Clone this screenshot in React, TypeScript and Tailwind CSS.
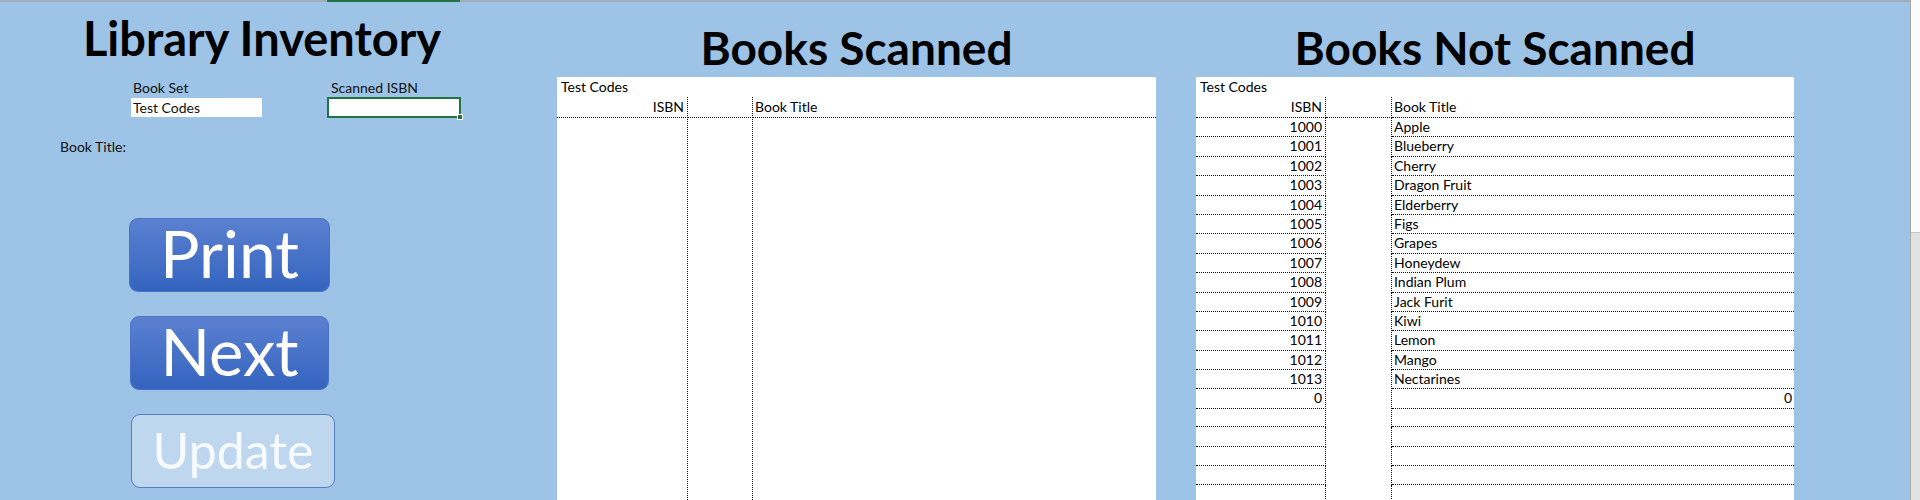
import React from "react";

const F = "font-['Lato',sans-serif]";

const fruits: [number, string][] = [
  [1000, "Apple"],
  [1001, "Blueberry"],
  [1002, "Cherry"],
  [1003, "Dragon Fruit"],
  [1004, "Elderberry"],
  [1005, "Figs"],
  [1006, "Grapes"],
  [1007, "Honeydew"],
  [1008, "Indian Plum"],
  [1009, "Jack Furit"],
  [1010, "Kiwi"],
  [1011, "Lemon"],
  [1012, "Mango"],
  [1013, "Nectarines"],
];

function LeftPanel() {
  return (
    <div className={`w-[557px] shrink-0 flex flex-col ${F}`}>
      <div className="w-[524px] mt-[13px] h-[47px] leading-[47px] text-center text-[47px] font-bold text-black">
        Library Inventory
      </div>
      <div className="flex mt-[16px] text-[14px] text-[#111]">
        <div className="ml-[131px] w-[131px] flex flex-col">
          <div className="h-[20px] leading-[20px] pl-[2px]">Book Set</div>
          <div className="h-[19px] leading-[19px] bg-white pl-[2px]">Test Codes</div>
        </div>
        <div className="ml-[65px] w-[134px] flex flex-col">
          <div className="h-[20px] leading-[20px] pl-[4px]">Scanned ISBN</div>
          <div className="relative -mt-[1px] h-[21px] bg-white border-2 border-[#217346]">
            <div className="absolute -right-[4px] -bottom-[4px] w-[6px] h-[6px] bg-[#217346] border border-white" />
          </div>
        </div>
      </div>
      <div className="mt-[19px] ml-[60px] h-[20px] leading-[20px] text-[14px] text-[#111]">Book Title:</div>
      <div className="mt-[61px] ml-[129px] w-[201px] h-[74px] rounded-[9px] border border-[#4d72c2] bg-gradient-to-b from-[#5b80d0] to-[#3464bf] flex items-center justify-center text-white text-[66px] leading-none pb-[5px]">
        Print
      </div>
      <div className="mt-[24px] ml-[130px] w-[199px] h-[74px] rounded-[9px] border border-[#4d72c2] bg-gradient-to-b from-[#5b80d0] to-[#3464bf] flex items-center justify-center text-white text-[65px] leading-none pb-[4px]">
        Next
      </div>
      <div className="mt-[24px] ml-[131px] w-[204px] h-[74px] rounded-[9px] border border-[#5a7cc5] bg-[#bed6ee] flex items-center justify-center text-[#f7faff] text-[50px] leading-none pb-[2px]">
        Update
      </div>
    </div>
  );
}

const dot = "border-dotted border-[#111]";

function ScannedTable() {
  return (
    <div className={`w-[599px] shrink-0 flex flex-col ${F}`}>
      <div className="h-[75px] flex items-end justify-center pb-[6px]">
        <div className="text-[46px] leading-[46px] font-bold text-black">Books Scanned</div>
      </div>
      <div className="flex-1 bg-white flex flex-col text-[14px] text-black">
        <div className="h-[20px] leading-[20px] pl-[4px]">Test Codes</div>
        <div className="grid grid-cols-[131px_65px_1fr] h-[20px] leading-[20px]">
          <div className={`border-r border-b ${dot} text-right pr-[3px]`}>ISBN</div>
          <div className={`border-r border-b ${dot}`} />
          <div className={`border-b ${dot} pl-[2px]`}>Book Title</div>
        </div>
        <div className="flex-1 grid grid-cols-[131px_65px_1fr]">
          <div className={`border-r ${dot}`} />
          <div className={`border-r ${dot}`} />
          <div />
        </div>
      </div>
    </div>
  );
}

function NotScannedTable() {
  const rows: [string, string, boolean][] = fruits.map(([n, t]) => [String(n), t, false]);
  rows.push(["0", "0", true]);
  for (let i = 0; i < 6; i++) rows.push(["", "", false]);
  return (
    <div className={`w-[598px] shrink-0 flex flex-col ${F}`}>
      <div className="h-[75px] flex items-end justify-center pb-[6px]">
        <div className="text-[46px] leading-[46px] font-bold text-black">Books Not Scanned</div>
      </div>
      <div className="flex-1 bg-white flex flex-col text-[14px] text-black overflow-hidden">
        <div className="h-[20px] leading-[20px] pl-[4px] shrink-0">Test Codes</div>
        <div className="grid grid-cols-[130px_66px_1fr] h-[20px] leading-[20px] shrink-0">
          <div className={`border-r border-b ${dot} text-right pr-[3px]`}>ISBN</div>
          <div className={`border-r border-b ${dot}`} />
          <div className={`border-b ${dot} pl-[2px]`}>Book Title</div>
        </div>
        {rows.map(([n, t, right], i) => (
          <div key={i} className="grid grid-cols-[130px_66px_1fr] h-[19.4px] leading-[19.4px] shrink-0">
            <div className={`border-r border-b ${dot} text-right pr-[3px]`}>{n}</div>
            <div className={`border-r ${dot}`} />
            <div className={`border-b ${dot} ${right ? "text-right pr-[2px]" : "pl-[2px]"}`}>{t}</div>
          </div>
        ))}
      </div>
    </div>
  );
}

export default function App() {
  return (
    <div className="w-[1920px] h-[500px] overflow-hidden flex bg-[#9dc3e6]">
      <div className="w-[1910px] h-[500px] flex flex-col">
        <div className="h-[2px] bg-[#a3adba] relative shrink-0">
          <div className="absolute left-[327px] top-0 w-[133px] h-[2px] bg-[#217346]" />
        </div>
        <div className="flex-1 flex">
          <LeftPanel />
          <ScannedTable />
          <div className="w-[40px] shrink-0" />
          <NotScannedTable />
          <div className="flex-1" />
        </div>
      </div>
      <div className="w-[10px] h-[500px] flex flex-col border-l border-[#a8a8a8]">
        <div className="h-[233px] bg-[#fbfbfb] border-b border-[#c6c6c6]" />
        <div className="flex-1 bg-[#e1e1e1]" />
      </div>
    </div>
  );
}
